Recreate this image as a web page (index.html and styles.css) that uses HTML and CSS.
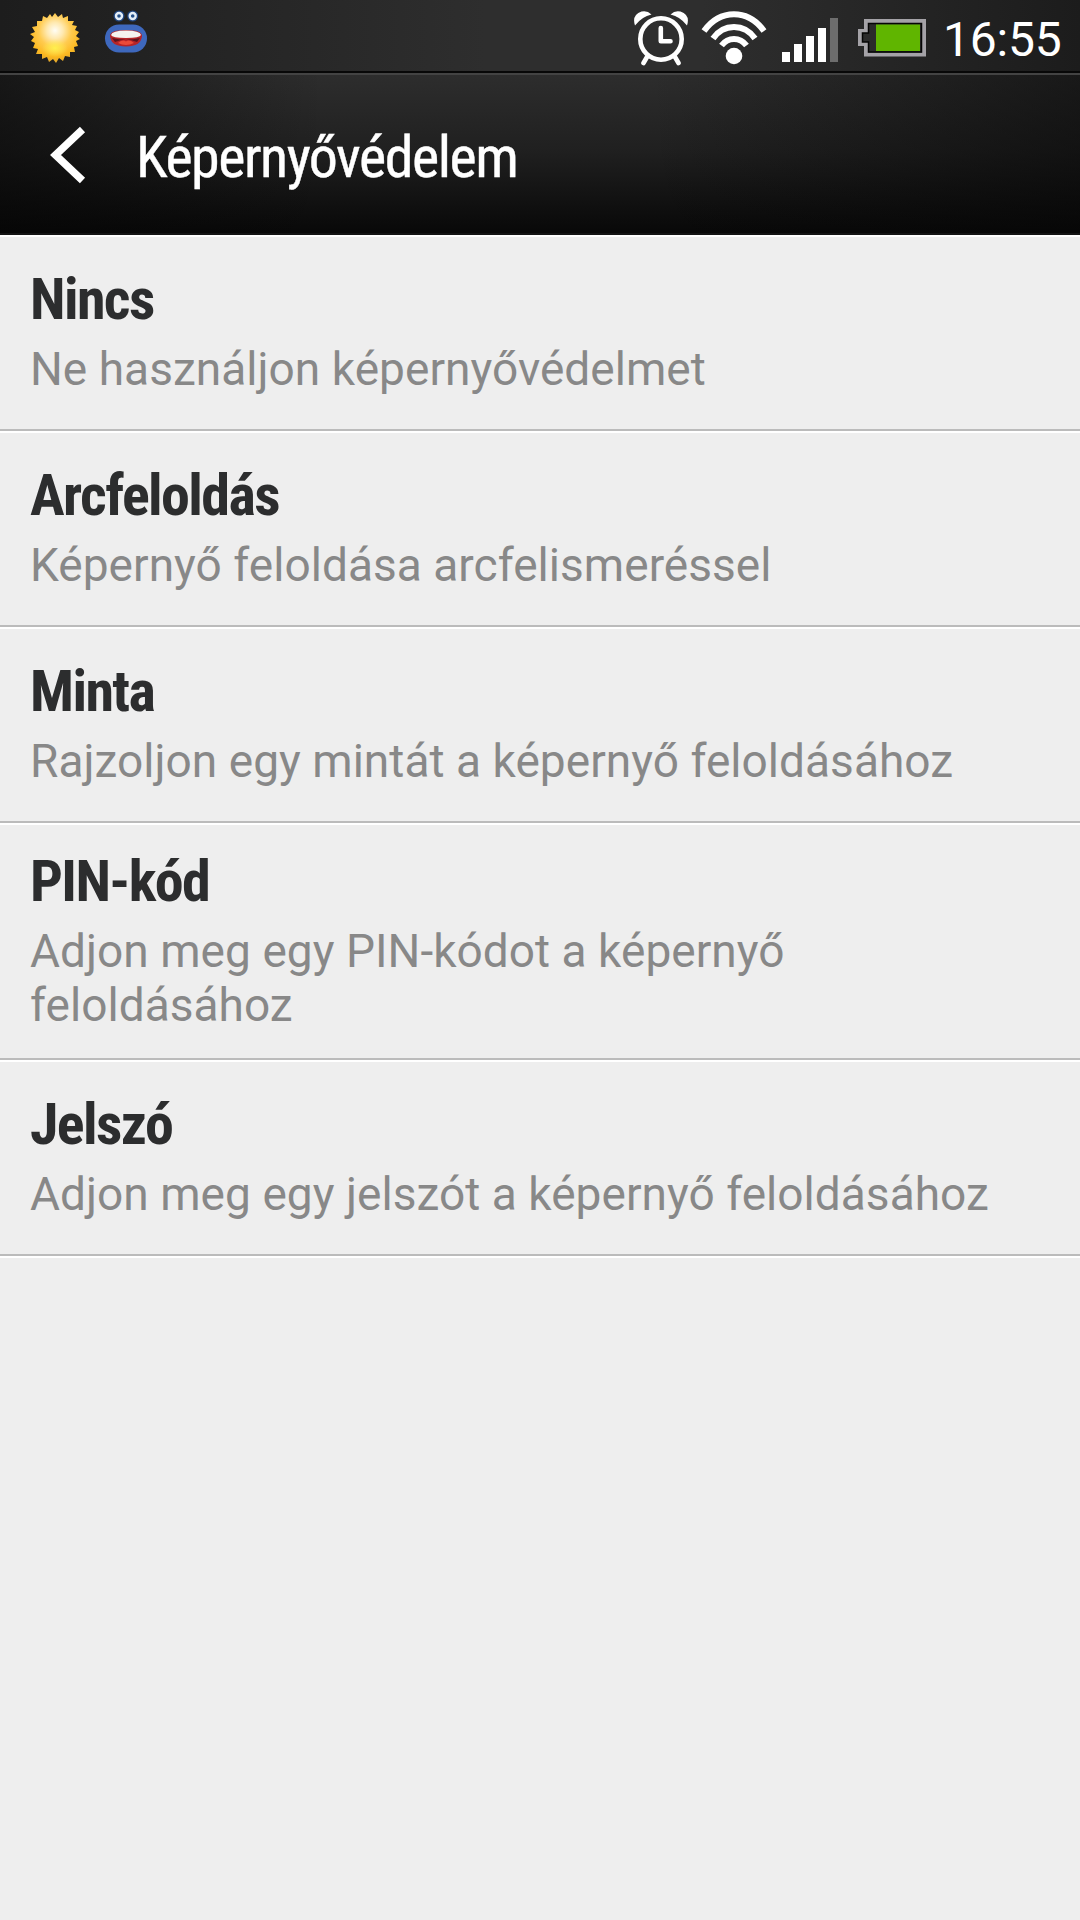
FILE: index.html
```html
<!DOCTYPE html>
<html lang="hu">
    <head>
        <meta charset="utf-8">
        <title>Képernyővédelem</title>
        <link rel="stylesheet" href="styles.css">
    </head>
    <body>
        <div class="top">
            <div class="statusbar">
                <svg class="sun" width="52" height="52" viewBox="0 0 52 52">
                    <defs>
                        <radialGradient id="sunFill" cx="50%" cy="35%" r="65%">
                            <stop offset="0" stop-color="#fffdf5"/>
                            <stop offset="0.25" stop-color="#ffe9b0"/>
                            <stop offset="0.5" stop-color="#ffcb50"/>
                            <stop offset="0.8" stop-color="#fcb921"/>
                            <stop offset="1" stop-color="#e0a52c"/>
                        </radialGradient>
                        <radialGradient id="sunGlow">
                            <stop offset="0" stop-color="#fff04e"/>
                            <stop offset="1" stop-color="#fff04e" stop-opacity="0"/>
                        </radialGradient>
                    </defs>
                    <path d="M26 1L29 5L33 2L34 6L39 4L39 9L45 9L43 13L48 14L46 18L50 20L47 24L51 27L47 29L49 34L45 35L46 40L41 40L41 45L36 44L34 49L30 46L27 51L24 47L20 50L18 45L13 47L13 42L7 42L9 37L4 36L6 31L2 29L5 25L1 22L6 20L3 15L8 14L8 9L13 9L14 4L18 6L21 2L23 5Z" fill="url(#sunFill)"/>
                    <ellipse cx="26" cy="36" rx="13" ry="9" fill="url(#sunGlow)"/>
                </svg>
                <svg class="monster" width="44" height="44" viewBox="0 0 44 44">
                    <circle cx="15" cy="6" r="5.5" fill="#20457e"/>
                    <circle cx="28.7" cy="6" r="5.5" fill="#20457e"/>
                    <circle cx="15" cy="6" r="3" fill="#24508a" stroke="#e4eef8" stroke-width="2.4"/>
                    <circle cx="28.7" cy="6" r="3" fill="#24508a" stroke="#e4eef8" stroke-width="2.4"/>
                    <rect x="1" y="14.5" width="42" height="28" rx="14" fill="#3e68bd"/>
                    <path d="M6 26Q6 20 22 20T38 26Q37 36.500 22 36.500T6 26Z" fill="#b52428"/>
                    <path d="M7 25Q8 20.500 22 20.500T37 25Q36 28 22 28T7 25Z" fill="#f5f2ef"/>
                    <path d="M8 28Q22 31 36 28L33 32Q22 27 11 32Z" fill="#5d1420"/>
                    <path d="M14 33Q19 29 22 31.500Q25 29 30 33Q22 37 14 33Z" fill="#ea4a38"/>
                </svg>
                <div class="spacer"></div>
                <svg class="alarm" width="56" height="56" viewBox="0 0 56 56">
                    <circle cx="28" cy="29" r="20.700" class="line"/>
                    <path d="M2 15.500Q-1.500 5 8.500 1.500Q14 0 18.500 4.500Q9 6.500 2 15.500Z" fill="#fff"/>
                    <path d="M54 15.500Q57.500 5 47.500 1.500Q42 0 37.500 4.500Q47 6.500 54 15.500Z" fill="#fff"/>
                    <path d="M27.800 18V31.300H37.500M14 47L10.500 53M42 47L45.500 53" class="line round"/>
                </svg>
                <svg class="wifi" width="66" height="56" viewBox="0 0 66 56">
                    <circle cx="33" cy="46" r="8.300" fill="#fff"/>
                    <path d="M3 21Q15 4.200 33 4.200T63 21M12 28.500Q20 17 33 17T54 28.500M20.500 35.500Q25.500 29 33 29T45.500 35.500" class="line wide"/>
                </svg>
                <svg class="signal" width="56" height="44" viewBox="0 0 56 44">
                    <path d="M0 34h8v10H0zM12 26h8v18h-8zM24 18h8v26h-8zM36 10h8v34h-8z" fill="#fff"/>
                    <path d="M48 0h8v44h-8z" fill="#6d6d6d"/>
                </svg>
                <svg class="battery" width="68" height="38" viewBox="0 0 68 38">
                    <path d="M8 2H66V35.500H8V25H2V12H8Z" fill="#222" stroke="#a4a2a7" stroke-width="4"/>
                    <path d="M10.500 4.500H63.500V33H10.500V23H4.500V14H10.500Z" fill="#2b2b2b" stroke="#050505" stroke-width="1.500"/>
                    <path d="M18 5.500H62V32H18Z" fill="#60b500"/>
                </svg>
                <span class="clock">16:55</span>
            </div>
            <div class="header">
                <svg class="back" width="40" height="60" viewBox="0 0 40 60">
                    <path d="M34.500 4.500L7.500 30L34.500 55.500" fill="none" stroke="#fff" stroke-width="7.500"/>
                </svg>
                <h1>Képernyővédelem</h1>
            </div>
        </div>

        <ul class="list">
            <li>
                <h2>Nincs</h2>
                <p>Ne használjon képernyővédelmet</p>
            </li>
            <li>
                <h2>Arcfeloldás</h2>
                <p>Képernyő feloldása arcfelismeréssel</p>
            </li>
            <li>
                <h2>Minta</h2>
                <p>Rajzoljon egy mintát a képernyő feloldásához</p>
            </li>
            <li class="tall">
                <h2>PIN-kód</h2>
                <p>Adjon meg egy PIN-kódot a képernyő<br>feloldásához</p>
            </li>
            <li>
                <h2>Jelszó</h2>
                <p>Adjon meg egy jelszót a képernyő feloldásához</p>
            </li>
        </ul>
    </body>
</html>
```
FILE: styles.css
```css
body {
    margin: 0;
    min-height: 1920px;
    background-color: #eee;
    font-family: Roboto, "Noto Sans", sans-serif;
}
h1,
h2,
p,
ul {
    margin: 0;
    padding: 0;
}
svg {
    display: block;
    flex: none;
}
.top {
    height: 235px;
    box-sizing: border-box;
    border-bottom: 2px solid #141414;
    background:
        linear-gradient(to right, rgba(5,5,5,0.55), rgba(5,5,5,0) 30%, rgba(5,5,5,0) 60%, rgba(5,5,5,0.5)),
        linear-gradient(to bottom, #2e2e2e 70px, #202020 150px, #090909 230px);
    color: #fff;
}
.statusbar {
    display: flex;
    align-items: flex-start;
    height: 75px;
    box-sizing: border-box;
    border-bottom: 2px solid #434343;
    box-shadow: inset 0 -2px #080808;
    background: linear-gradient(to right, #1d1d1d, #2e2e2e 45%, #2e2e2e 65%, #1c1c1c);
}
.sun {
    margin: 12px 0 0 29px;
}
.monster {
    margin: 10px 0 0 23px;
}
.spacer {
    flex: 1;
}
.line {
    fill: none;
    stroke: #fff;
    stroke-width: 4.6;
}
.round {
    stroke-linecap: round;
    stroke-linejoin: round;
}
.wide {
    stroke-width: 6;
}
.alarm {
    margin: 10px 12px 0 0;
}
.wifi {
    margin: 10px 15px 0 0;
}
.signal {
    margin: 18px 20px 0 0;
}
.battery {
    margin: 19px 17px 0 0;
}
.clock {
    width: 137px;
    padding-top: 12px;
    font-size: 48px;
    line-height: 56px;
    letter-spacing: -0.2px;
    white-space: nowrap;
}
.header {
    display: flex;
    align-items: center;
    height: 158px;
}
.back {
    margin: 2px 0 0 48px;
}
h1,
h2 {
    font-family: "Roboto Condensed", Roboto, sans-serif;
    font-stretch: 75%;
    font-size: 58px;
    line-height: 66px;
    letter-spacing: -1.6px;
    white-space: nowrap;
}
h1 {
    margin: 5px 0 0 48px;
    font-weight: 400;
    letter-spacing: -1.5px;
    -webkit-text-stroke: 0.4px #fff;
}
.list {
    list-style: none;
    border-bottom: 2px solid #fff;
}
.list li {
    height: 196px;
    box-sizing: border-box;
    padding: 29px 30px 0;
    border-top: 2px solid #fff;
    border-bottom: 2px solid #bbb;
}
.list .tall {
    height: 237px;
    padding-top: 23px;
}
h2 {
    color: #2c2d2e;
    font-weight: 700;
}
p {
    margin-top: 10px;
    color: #888;
    font-size: 46px;
    line-height: 54px;
    letter-spacing: 0.04px;
    white-space: nowrap;
}
```
